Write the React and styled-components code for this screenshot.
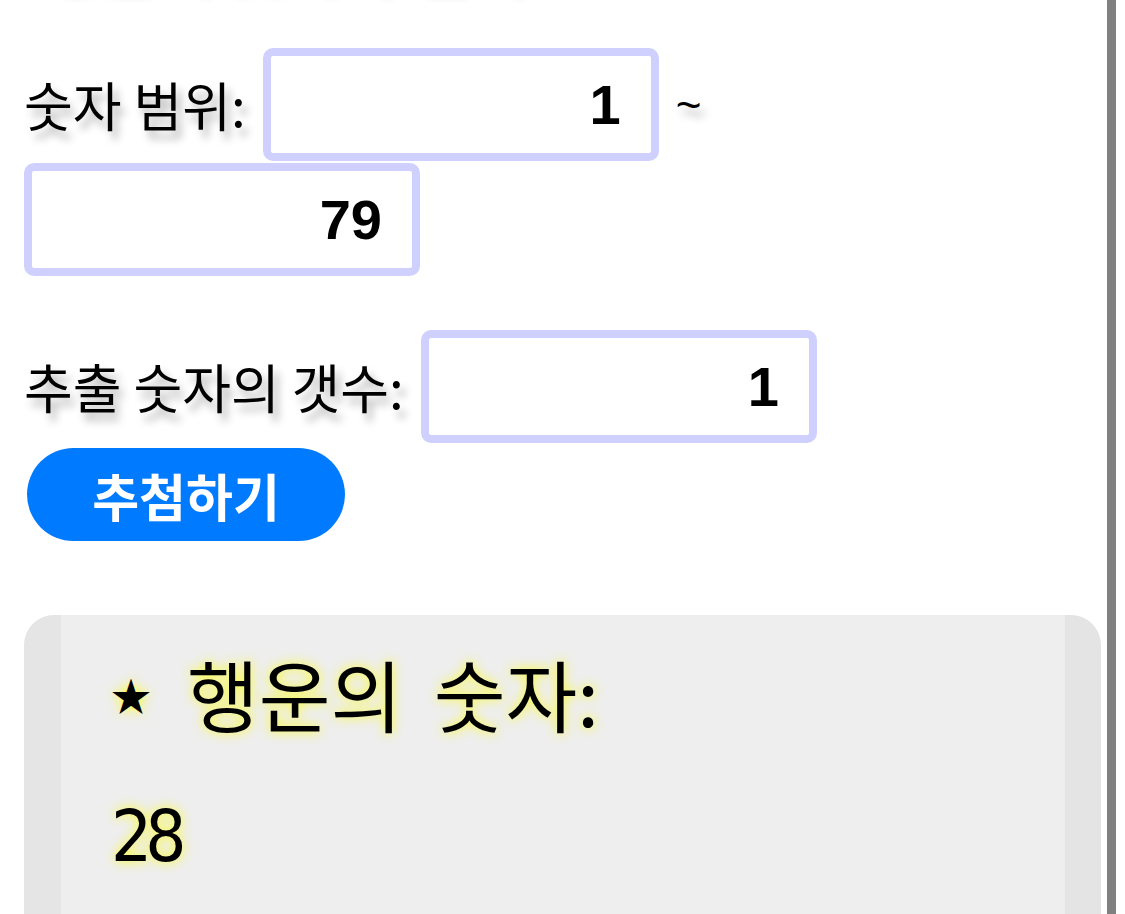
import React from "react";
import styled, { createGlobalStyle } from "styled-components";

const GlobalStyle = createGlobalStyle`
  html, body {
    margin: 0;
    padding: 0;
    background: #ffffff;
    overflow: hidden;
  }
  #root {
    height: 914px;
  }
`;

const Screen = styled.div`
  display: flex;
  height: 914px;
  overflow: hidden;
  background: #fff;
`;

const Page = styled.main`
  flex: 1;
  min-width: 0;
  padding: 0 6px 0 24px;
  font-family: "Noto Sans CJK KR", "Noto Sans", sans-serif;
  color: #000;
`;

const ScrollTrack = styled.div`
  width: 9px;
  margin-right: 9px;
  background: #808080;
`;

const Title = styled.h1`
  margin: -92px 0 0 18px;
  font-size: 62px;
  line-height: 76px;
  font-weight: 700;
  white-space: nowrap;
  text-shadow: 4px 16px 9px rgba(0, 0, 0, 0.35);
`;

const Row = styled.div`
  display: flex;
  flex-wrap: wrap;
  align-items: center;
  column-gap: 17px;
  row-gap: 2px;
  margin-top: ${(p) => p.$top || 0}px;
`;

const Label = styled.label`
  font-size: 53px;
  line-height: 1;
  text-shadow: 5px 8px 9px rgba(0, 0, 0, 0.3);
  white-space: nowrap;
`;

const Tilde = styled.span`
  font-family: "Liberation Sans", Arial, sans-serif;
  font-size: 44px;
  text-shadow: 5px 8px 9px rgba(0, 0, 0, 0.3);
`;

const NumberInput = styled.input`
  box-sizing: border-box;
  width: 396px;
  height: 113px;
  border: 8px solid #d0d0ff;
  border-radius: 10px;
  padding: 0 30px 0 10px;
  background: #fff;
  text-align: right;
  font-family: "Liberation Sans", Arial, sans-serif;
  font-weight: 700;
  font-size: 56px;
  color: #000;
  outline: none;
`;

const DrawButton = styled.button`
  display: block;
  width: 318px;
  height: 93px;
  margin-top: 5px;
  margin-left: 3px;
  border: none;
  border-radius: 47px;
  background: #007bff;
  color: #fff;
  font-family: "Noto Sans CJK KR", sans-serif;
  font-size: 51px;
  font-weight: 700;
  cursor: pointer;
`;

const ResultBox = styled.section`
  margin-top: 74px;
  height: 400px;
  background: #eeeeee;
  border-left: 37px solid #e5e5e5;
  border-right: 36px solid #e4e4e4;
  border-radius: 30px 30px 0 0;
  padding: 32px 50px;
  font-family: "Noto Sans CJK KR", sans-serif;
`;

const ResultTitle = styled.h2`
  display: flex;
  align-items: center;
  gap: 36px;
  margin: 0;
  font-size: 78px;
  font-weight: 400;
  line-height: 1.2;
  word-spacing: 14px;
  text-shadow: 0 0 12px rgba(255, 255, 0, 0.85);
`;

const Star = styled.span`
  font-size: 40px;
`;

const LuckyNumber = styled.p`
  margin: 52px 0 0;
  font-family: "DejaVu Sans Condensed", "DejaVu Sans", sans-serif;
  font-size: 72px;
  letter-spacing: -7px;
  line-height: 1.2;
  text-shadow: 0 0 12px rgba(255, 255, 0, 0.85);
`;

export default function App() {
  return (
    <>
      <GlobalStyle />
      <Screen>
        <Page>
          <Title>행운의 숫자 추첨기</Title>
          <Row $top={64}>
            <Label htmlFor="min">숫자 범위:</Label>
            <NumberInput id="min" defaultValue="1" inputMode="numeric" />
            <Tilde>~</Tilde>
            <NumberInput id="max" defaultValue="79" inputMode="numeric" />
          </Row>
          <Row $top={54}>
            <Label htmlFor="count">추출 숫자의 갯수:</Label>
            <NumberInput id="count" defaultValue="1" inputMode="numeric" />
          </Row>
          <DrawButton type="button">추첨하기</DrawButton>
          <ResultBox>
            <ResultTitle>
              <Star>★</Star>
              <span>행운의 숫자:</span>
            </ResultTitle>
            <LuckyNumber>28</LuckyNumber>
          </ResultBox>
        </Page>
        <ScrollTrack />
      </Screen>
    </>
  );
}
